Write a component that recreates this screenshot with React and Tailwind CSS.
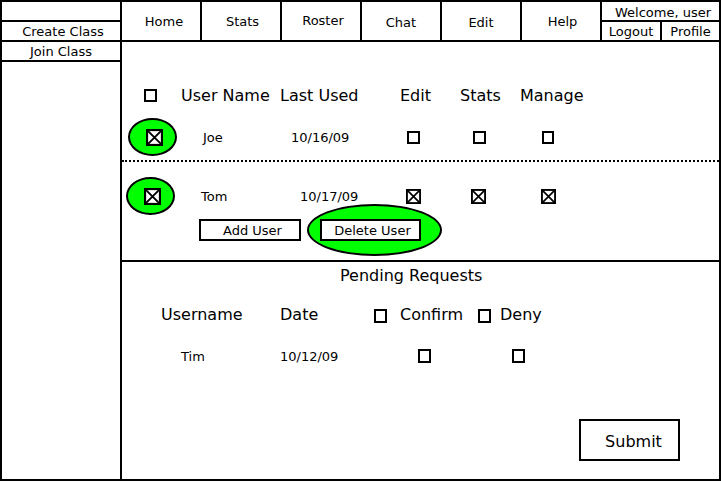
import React from 'react';

const Box = ({ className = '' }) => (
  <div className={`border-2 border-black bg-white shrink-0 ${className}`} />
);

const CrossBox = ({ size = 16 }) => (
  <svg width={size} height={size} viewBox="0 0 16 16" className="shrink-0">
    <rect x="1" y="1" width="14" height="14" fill="white" stroke="black" strokeWidth="2" />
    <path d="M1.5 1.5L14.5 14.5M14.5 1.5L1.5 14.5" stroke="black" strokeWidth="1.8" />
  </svg>
);

const Blob = ({ children }) => (
  <div className="w-[49px] h-[38px] rounded-[50%] border-2 border-black bg-[#00ff00] flex items-center justify-center pl-[3px]">
    {children}
  </div>
);

const tabs = [
  { label: 'Home', pad: 'pl-[6px]' },
  { label: 'Stats', pad: 'pl-[3px]' },
  { label: 'Roster', pad: 'pl-[4px] pb-[2px]' },
  { label: 'Chat', pad: 'pt-[2px]' },
  { label: 'Edit', pad: 'pt-[2px]' },
  { label: 'Help', pad: 'pl-[3px]' },
];

export default function App() {
  return (
    <div className="w-[721px] h-[482px] bg-white">
      <div className="flex w-[721px] h-[481px] border-2 border-black text-black font-['DejaVu_Sans',sans-serif]">
        {/* Left menu */}
        <aside className="w-[120px] shrink-0 border-r-2 border-black flex flex-col text-[13px] leading-none">
          <div className="h-[20px] border-b-2 border-black" />
          <div className="h-[20px] border-b-2 border-black flex items-center justify-center pl-[4px]">
            Create Class
          </div>
          <div className="h-[20px] border-b-2 border-black flex items-center justify-center">
            Join Class
          </div>
        </aside>

        <main className="flex-1 flex flex-col">
          {/* Top nav */}
          <nav className="h-[40px] shrink-0 border-b-2 border-black flex text-[13px] leading-none">
            {tabs.map((t) => (
              <div
                key={t.label}
                className={`w-[80px] shrink-0 border-r-2 border-black flex items-center justify-center ${t.pad}`}
              >
                {t.label}
              </div>
            ))}
            <div className="flex-1 flex flex-col">
              <div className="h-[20px] border-b-2 border-black flex items-center justify-center pl-[5px] pt-[3px]">
                Welcome, user
              </div>
              <div className="flex-1 flex">
                <div className="w-[60px] border-r-2 border-black flex items-center justify-center">Logout</div>
                <div className="flex-1 flex items-center justify-center">Profile</div>
              </div>
            </div>
          </nav>

          {/* Users */}
          <section className="h-[220px] shrink-0 border-b-2 border-black flex flex-col">
            <div className="flex items-center h-[19px] mt-[44px] pl-[22px] text-[16px] leading-none">
              <div className="w-[37px]"><Box className="w-[13px] h-[13px]" /></div>
              <div className="w-[99px]">User Name</div>
              <div className="w-[120px]">Last Used</div>
              <div className="w-[60px]">Edit</div>
              <div className="w-[60px]">Stats</div>
              <div>Manage</div>
            </div>

            <div className="flex items-center h-[38px] mt-[13px] pl-[6px] text-[13px] leading-none">
              <div className="w-[75px]"><Blob><CrossBox size={17} /></Blob></div>
              <div className="w-[88px]">Joe</div>
              <div className="w-[116px]">10/16/09</div>
              <div className="w-[66px]"><Box className="w-[13px] h-[13px]" /></div>
              <div className="w-[69px]"><Box className="w-[13px] h-[13px]" /></div>
              <div><Box className="w-[12px] h-[13px]" /></div>
            </div>

            <div className="mt-[4px] border-t-2 border-dotted border-black" />

            <div className="flex items-center h-[38px] mt-[15px] pl-[4px] text-[13px] leading-none">
              <div className="w-[75px]"><Blob><CrossBox size={17} /></Blob></div>
              <div className="w-[99px]">Tom</div>
              <div className="w-[106px]">10/17/09</div>
              <div className="w-[65px]"><CrossBox size={15} /></div>
              <div className="w-[70px]"><CrossBox size={15} /></div>
              <div><CrossBox size={15} /></div>
            </div>

            <div className="flex items-center h-[52px] mt-[-11px] pl-[77px] text-[13px] leading-none">
              <div className="w-[102px] h-[22px] border-2 border-black flex items-center justify-center pl-[5px] pt-[1px]">
                Add User
              </div>
              <div className="ml-[6px] w-[135px] h-[52px] rounded-[50%] border-2 border-black bg-[#00ff00] flex items-center pl-[11px]">
                <div className="w-[101px] h-[22px] border-2 border-black bg-white flex items-center justify-center pl-[4px] pt-[1px]">
                  Delete User
                </div>
              </div>
            </div>
          </section>

          {/* Pending requests */}
          <section className="flex-1 flex flex-col">
            <div className="flex items-center h-[20px] mt-[4px] pl-[218px] text-[16px] leading-none">
              Pending Requests
            </div>

            <div className="flex items-center h-[20px] mt-[19px] pl-[39px] text-[16px] leading-none">
              <div className="w-[119px]">Username</div>
              <div className="w-[94px]">Date</div>
              <div className="w-[26px]"><Box className="w-[13px] h-[14px] mt-[2px]" /></div>
              <div className="w-[78px]">Confirm</div>
              <div className="w-[22px]"><Box className="w-[13px] h-[14px] mt-[2px]" /></div>
              <div>Deny</div>
            </div>

            <div className="flex items-center h-[20px] mt-[21px] pl-[59px] text-[13px] leading-none">
              <div className="w-[99px]">Tim</div>
              <div className="w-[138px]">10/12/09</div>
              <div className="w-[94px]"><Box className="w-[13px] h-[14px]" /></div>
              <div><Box className="w-[13px] h-[14px]" /></div>
            </div>

            <div className="mt-[53px] pl-[457px]">
              <div className="w-[101px] h-[42px] border-2 border-black flex items-center justify-center pl-[8px] pt-[3px] text-[16px] leading-none">
                Submit
              </div>
            </div>
          </section>
        </main>
      </div>
    </div>
  );
}
